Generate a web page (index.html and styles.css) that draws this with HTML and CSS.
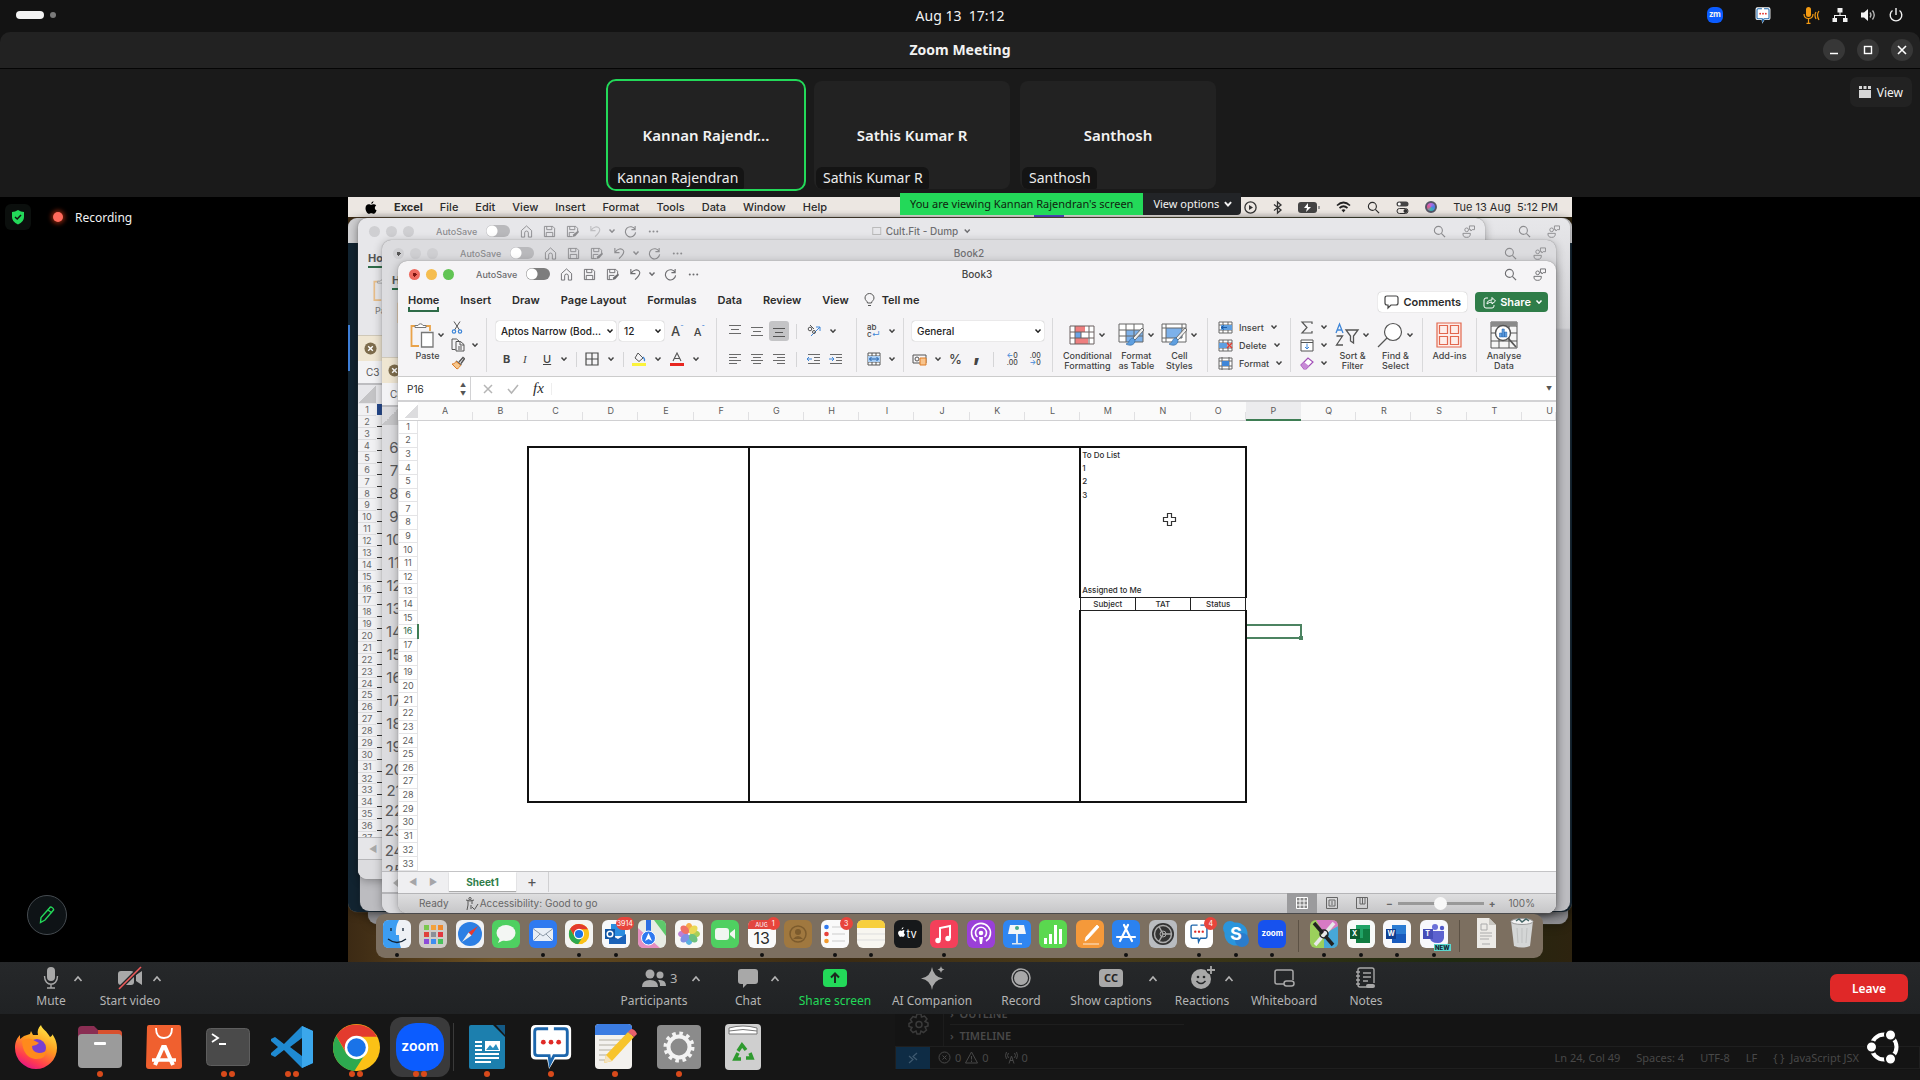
FILE: index.html
```html
<!DOCTYPE html>
<html lang="en">
<head>
<meta charset="utf-8">
<title>Zoom Meeting</title>
<link rel="stylesheet" href="styles.css">
</head>
<body>
<svg class="sprite" aria-hidden="true">
  <symbol id="chev" viewBox="0 0 8 8"><path d="M1.500 2.500 4 5.200 6.500 2.500" fill="none" stroke="currentColor" stroke-width="1.500"/></symbol>
  <symbol id="caret" viewBox="0 0 10 10"><path d="M1.500 7 5 3 8.500 7" fill="none" stroke="currentColor" stroke-width="1.600"/></symbol>
  <symbol id="home" viewBox="0 0 14 14"><path d="M1.500 6 7 1 12.500 6v7H9V8.500a2 2 0 0 0-4 0V13H1.500z" fill="none" stroke="currentColor"/></symbol>
  <symbol id="save" viewBox="0 0 14 14"><path d="M1.500 1.500h9l2 2v9h-11zM4 1.500v3.500h5.500V1.500M3.500 12.500V8h7v4.500" fill="none" stroke="currentColor"/></symbol>
  <symbol id="saveas" viewBox="0 0 14 14"><path d="M7 12.500H1.500v-11h9l2 2v3M4 1.500v3.500h5.500V1.500M3.500 12.500V8H9" fill="none" stroke="currentColor"/><path d="m7 13 1-3 5-4 1 1.500L10 12z" fill="currentColor"/></symbol>
  <symbol id="undo" viewBox="0 0 14 14"><path d="M2 1v5h5M2 6C5 1.500 9 1 11 3.500s0 5-4.500 9" fill="none" stroke="currentColor" stroke-width="1.200"/></symbol>
  <symbol id="redo" viewBox="0 0 14 14"><path d="M12 1v4H8M12 5a5.500 5.500 0 1 0 .5 3" fill="none" stroke="currentColor" stroke-width="1.200"/></symbol>
  <symbol id="dots" viewBox="0 0 14 14"><g fill="currentColor"><circle cx="3" cy="7" r="1.100"/><circle cx="7" cy="7" r="1.100"/><circle cx="11" cy="7" r="1.100"/></g></symbol>
  <symbol id="search" viewBox="0 0 14 14"><circle cx="5.800" cy="5.800" r="4.300" fill="none" stroke="currentColor" stroke-width="1.200"/><path d="m9 9 4 4" stroke="currentColor" stroke-width="1.300"/></symbol>
  <symbol id="people" viewBox="0 0 14 14"><g fill="none" stroke="currentColor"><circle cx="5" cy="5.200" r="2"/><path d="M1 9h8c0 3-1 4.300-4 4.300S1 12 1 9zM8 1h5.500v4H11L9.500 6.500V5H8z"/></g></symbol>
  <symbol id="clip" viewBox="0 0 24 26"><path d="M9 24H1.500V4H7M15 4h5v5" fill="none" stroke="#e9a34a" stroke-width="1.800"/><path d="M5 5.500V3.500h3a2.700 2.700 0 0 1 5 0h3v2z" fill="#fff" stroke="#777"/><path d="M11.500 10.500H23V25H11.500z" fill="#fff" stroke="#777" stroke-width="1.300"/></symbol>
  <symbol id="cut" viewBox="0 0 12 13"><path d="M3 .5 8.500 9M9 .5 3.500 9" stroke="#555" fill="none"/><g fill="none" stroke="#3f86d8" stroke-width="1.200"><circle cx="3" cy="10.500" r="1.700"/><circle cx="9" cy="10.500" r="1.700"/></g></symbol>
  <symbol id="copy" viewBox="0 0 14 14"><path d="M4.500 11.500H1V1h4.500L8 3M5 3.500h4.500l3.500 3V13H5zM9 3.500V7h4M7 9h4M7 11h4" fill="none" stroke="#555"/></symbol>
  <symbol id="brush" viewBox="0 0 14 14"><path d="m8 6 4-4.500 1.500 1.200L10 7.500M5 5l5.500 4" fill="none" stroke="#555" stroke-width="1.400"/><path d="M5 5.500c-1 2-2.500 2.500-4 2.500l5 5c2-1 3-2.500 3.500-4z" fill="#f6c78f" stroke="#dd7d27"/></symbol>
  <symbol id="al" viewBox="0 0 14 12"><path d="M1 1.500h12M1 4.500h8M1 7.500h12M1 10.500h8" stroke="#6a6a6a"/></symbol>
  <symbol id="ac" viewBox="0 0 14 12"><path d="M1 1.500h12M3 4.500h8M1 7.500h12M3 10.500h8" stroke="#6a6a6a"/></symbol>
  <symbol id="ar" viewBox="0 0 14 12"><path d="M1 1.500h12M5 4.500h8M1 7.500h12M5 10.500h8" stroke="#6a6a6a"/></symbol>
  <symbol id="vt" viewBox="0 0 14 12"><path d="M1 .5h12M3 4.500h8M1 8.500h12" stroke="#6a6a6a"/></symbol>
  <symbol id="vm" viewBox="0 0 14 12"><path d="M1 2.500h12M3 6.500h8M1 10.500h12" stroke="#6a6a6a"/></symbol>
  <symbol id="vb" viewBox="0 0 14 12"><path d="M1 3.500h12M3 7.500h8M1 11.500h12" stroke="#555"/></symbol>
  <symbol id="ind" viewBox="0 0 14 12"><path d="M1 1.500h12M7 4.500h6M7 7.500h6M1 10.500h12" stroke="#6a6a6a"/><path d="M0 6h5M2 4 0 6l2 2" stroke="#3f86d8" fill="none"/></symbol>
  <symbol id="outd" viewBox="0 0 14 12"><path d="M1 1.500h12M7 4.500h6M7 7.500h6M1 10.500h12" stroke="#6a6a6a"/><path d="M0 6h5M3 4l2 2-2 2" stroke="#3f86d8" fill="none"/></symbol>
  <symbol id="borders" viewBox="0 0 14 14"><path d="M1 1h12v12H1zM7 1v12M1 7h12" fill="none" stroke="#4a4a4a" stroke-width="1.200"/></symbol>
  <symbol id="fill" viewBox="0 0 14 14"><path d="m6 1 5 5-4 3.500L3 6z" fill="none" stroke="#555"/><path d="M11 5c2 2 2 3 1 4" fill="none" stroke="#3f86d8" stroke-width="1.300"/><path d="M0 11h14v3H0z" fill="#fbf33c"/></symbol>
  <symbol id="fcol" viewBox="0 0 14 14"><path d="M3 9 7 1l4 8M4.500 6.500h5" fill="none" stroke="#555" stroke-width="1.100"/><path d="M0 11h14v3H0z" fill="#e8261f"/></symbol>
  <symbol id="cellgrid" viewBox="0 0 26 20"><path d="M1 1h24v18H1z" fill="#fff"/><path d="M6 1h10v6H6zM6 13h13v6H6z" fill="#ee7f7f"/><path d="M6 7h6v6H6z" fill="#6ba4e6"/><path d="M1 1h24v18H1zM1 7h24M1 13h24M6 1v18M20 1v18M12 7v6" fill="none" stroke="#6b6060"/></symbol>
  <symbol id="fmttable" viewBox="0 0 26 24"><path d="M1 1h24v18H1z" fill="#fff"/><path d="M8 7h17v12H8z" fill="#7db1ea"/><path d="M1 1h24v18H1zM1 7h24M1 13h24M8 1v18M16 1v18" fill="none" stroke="#666"/><path d="m24 5-9 10 2 2 9-10z" fill="#eee" stroke="#555" stroke-width=".8"/><path d="M15 15c-4 0-3 5-7 6 3 2 9 2 9-4z" fill="#5f9fe0" stroke="#366ea8" stroke-width=".7"/></symbol>
  <symbol id="cellsty" viewBox="0 0 26 24"><path d="M1 1h24v18H1z" fill="#fff" stroke="#666"/><path d="M5 5h16v10H5z" fill="#7db1ea"/><path d="M1 5h24M5 1v18M1 15h20M21 1v14" stroke="#666" fill="none"/><path d="m24 5-9 10 2 2 9-10z" fill="#eee" stroke="#555" stroke-width=".8"/><path d="M15 15c-4 0-3 5-7 6 3 2 9 2 9-4z" fill="#5f9fe0" stroke="#366ea8" stroke-width=".7"/></symbol>
  <symbol id="ins" viewBox="0 0 15 13"><path d="M1 1h13v11H1zM1 4h13M1 9h13M5 1v11M10 1v11" fill="#fff" stroke="#666"/><path d="M3 4h11v5H3z" fill="#5f9fe0"/><path d="M6 4.500 3 6.500l3 2M3 6.500h6" stroke="#1c5da8" fill="none"/></symbol>
  <symbol id="del" viewBox="0 0 15 13"><path d="M1 1h13v11H1zM1 4h13M1 9h13M5 1v11M10 1v11" fill="#fff" stroke="#666"/><path d="M1 4h8v5H1z" fill="#5f9fe0"/><path d="m9 4 5 5m0-5L9 9" stroke="#e23b32" stroke-width="1.400"/></symbol>
  <symbol id="fmt" viewBox="0 0 15 13"><path d="M1 1h13v11H1zM1 4h13M1 9h13M4 0v13M11 0v13" fill="#fff" stroke="#666"/><path d="M4 4h7v5H4z" fill="#3f86d8"/></symbol>
  <symbol id="tile-x" viewBox="0 0 14 14"><circle cx="7" cy="7" r="6.500" fill="#7d6c4c"/><path d="m4.500 4.500 5 5m0-5-5 5" stroke="#fff" stroke-width="1.500"/></symbol>
  <symbol id="chrome" viewBox="0 0 44 44"><circle cx="22" cy="22" r="22" fill="#fbc116"/><path d="m3 11 9.500 16.500L22 32l-2 12A22 22 0 0 1 3 11z" fill="#2da94f"/><path d="m20 44 11-17-9 5-6 0z" fill="#2da94f"/><path d="M3 11A22 22 0 0 1 41.200 12H22l-9.500 15z" fill="#e33b2e"/><circle cx="22" cy="22" r="11" fill="#fff"/><circle cx="22" cy="22" r="8.700" fill="#1a73e8"/></symbol>
  <symbol id="bubble" viewBox="0 0 44 48"><path d="M6 1h32q5 0 5 5v26q0 5-5 5H26l-6 10-2-10H6q-5 0-5-5V6q0-5 5-5z" fill="#fff"/><path d="M19 5H8Q5 5 5 8v22q0 3 3 3h12l1 8 4-8h11q3 0 3-3V8q0-3-3-3H25" fill="none" stroke="#1c66ac" stroke-width="3"/><g fill="#e02b27"><circle cx="14" cy="19" r="2.500"/><circle cx="22" cy="19" r="2.500"/><circle cx="30" cy="19" r="2.500"/></g></symbol>
</svg>

<header class="topbar">
  <div class="spaces"><span class="pill"></span><span class="dot"></span></div>
  <div class="clock">Aug 13&nbsp; 17:12</div>
  <div class="tray">
    <span class="zm">zm</span>
    <svg class="tray-chat" width="16" height="17"><use href="#bubble"/></svg>
    <svg width="17" height="17" viewBox="0 0 17 17"><rect x="3" y="0" width="5" height="10" rx="2.500" fill="#f39a12"/><path d="M1 7c0 6 9 6 9 0M5.500 12v4M3.500 16.300h4M13 5q-2 3 0 7M16 4q-3 4 0 9" fill="none" stroke="#f39a12" stroke-width="1.200"/></svg>
    <svg width="16" height="16" viewBox="0 0 16 16" fill="#f2f2f2"><path d="M5.500 1h5v4.500h-2V8H14v3h1.500v4h-4.500v-4h2V9H3v2h2v4H.5v-4H2V8h5.500V5.500h-2z"/></svg>
    <svg width="16" height="16" viewBox="0 0 16 16"><path d="M1 5.500h3L8 2v12l-4-3.500H1z" fill="#f2f2f2"/><path d="M10 5.500q2 2.500 0 5M12.500 3.500q3.500 4.500 0 9" fill="none" stroke="#bbb" stroke-width="1.300"/></svg>
    <svg width="16" height="16" viewBox="0 0 16 16"><path d="M8 1v7M4.500 3.500a5.800 5.800 0 1 0 7 0" fill="none" stroke="#f2f2f2" stroke-width="1.400"/></svg>
  </div>
</header>

<div class="titlebar">
  <h1>Zoom Meeting</h1>
  <div class="winbtns">
    <button aria-label="Minimise"><svg width="10" height="10"><path d="M1 8.500h8" stroke="#fff" stroke-width="1.500"/></svg></button>
    <button aria-label="Maximise"><svg width="10" height="10"><rect x="1.500" y="1.500" width="7" height="7" fill="none" stroke="#fff" stroke-width="1.400"/></svg></button>
    <button aria-label="Close"><svg width="10" height="10"><path d="m1 1 8 8m0-8L1 9" stroke="#fff" stroke-width="1.600"/></svg></button>
  </div>
</div>

<section class="gallery">
  <div class="tiles">
    <div class="tile speaking"><b>Kannan Rajendr...</b><span>Kannan Rajendran</span></div>
    <div class="tile"><b>Sathis Kumar R</b><span>Sathis Kumar R</span></div>
    <div class="tile"><b>Santhosh</b><span>Santhosh</span></div>
  </div>
  <button class="viewbtn"><svg width="12" height="12" viewBox="0 0 12 12" fill="#d6d6d6"><path d="M0 0h3v3H0zM4.500 0h3v3h-3zM9 0h3v3H9zM0 4h12v8H0z"/></svg>View</button>
</section>

<main class="stage">
  <div class="rec">
    <span class="shield"><svg width="14" height="16" viewBox="0 0 14 16"><path d="M7 1q3 2 6 2v5q0 5-6 7.500Q1 13 1 8V3q3 0 6-2z" fill="#23d959"/><path d="m4 8 2.200 2L10 6" fill="none" stroke="#111" stroke-width="1.500"/></svg></span>
    <span class="reddot"></span>Recording
  </div>
  <button class="pen" aria-label="Annotate"><svg width="16" height="18" viewBox="0 0 16 18"><path d="M10.500 2q1-1.500 2.500-.5t1.700 2.300L6 14l-4.500 2.500L2 11.500zM9 4l4 3" fill="none" stroke="#23d959" stroke-width="1.400"/></svg></button>

  <div class="banner"><span>You are viewing Kannan Rajendran's screen</span><button>View options<svg width="10" height="10"><use href="#chev"/></svg></button></div>

  <div class="share">
    <nav class="macbar">
      <svg width="12" height="13" viewBox="0 0 12 13"><path d="M8.500 0q0 2.500-2.300 3Q6 1 8.500 0zM6.200 3.800C7 3.800 7.500 3.200 8.800 3.200q1.500.1 2.400 1.300c-2 1.300-1.700 4 .4 4.800C11 11 10 12.800 8.700 12.800c-1 0-1.300-.6-2.400-.6s-1.500.6-2.400.6C2.300 12.800.5 9.600.5 7.200S2 3.200 3.700 3.200c1.200 0 1.700.6 2.500.6z"/></svg>
      <b>Excel</b><span>File</span><span>Edit</span><span>View</span><span>Insert</span><span>Format</span><span>Tools</span><span>Data</span><span>Window</span><span>Help</span>
      <div class="macright">
        <svg width="13" height="13" viewBox="0 0 13 13"><circle cx="6.500" cy="6.500" r="5.600" fill="none" stroke="#333" stroke-width="1.300"/><path d="M5 4v5l4-2.500z" fill="#333"/></svg>
        <svg width="9" height="13" viewBox="0 0 9 13"><path d="M1 3.500 8 9l-3.500 3V1L8 4 1 9.500" fill="none" stroke="#333" stroke-width="1.300"/></svg>
        <svg width="22" height="11" viewBox="0 0 22 11"><rect width="19" height="11" rx="3" fill="#444"/><rect x="20" y="4" width="2" height="3" fill="#999"/><path d="m10 1-4 5h3l-1 4 5-5h-3z" fill="#fff"/></svg>
        <svg width="15" height="12" viewBox="0 0 15 12"><path d="M1 4.500q6.500-6 13 0M3.500 7q4-3.500 8 0" fill="none" stroke="#222" stroke-width="1.700"/><path d="M5.500 9q2-1.500 4 0l-2 2.500z" fill="#222"/></svg>
        <svg width="13" height="13"><use href="#search"/></svg>
        <svg width="13" height="13" viewBox="0 0 13 13"><rect x=".5" y=".5" width="12" height="5" rx="2.500" fill="#444"/><circle cx="3.300" cy="3" r="1.500" fill="#fff"/><rect x="1" y="7.500" width="11" height="5" rx="2.500" fill="none" stroke="#333"/><circle cx="9.500" cy="10" r="2" fill="#333"/></svg>
        <span class="siri"></span>
        <span class="mactime">Tue 13 Aug&nbsp; 5:12 PM</span>
      </div>
    </nav>
    <div class="purple"></div>
    <div class="win backgrey"></div>
    <div class="win backdark"><i></i></div>
    <div class="win w0"><div class="tb"><div class="tbr"><svg><use href="#search"/></svg><svg><use href="#people"/></svg></div></div></div>

    <div class="win w1">
      <div class="tb"><i class="tl"></i><i class="tl"></i><i class="tl"></i><span class="as">AutoSave</span><i class="tog"></i><svg><use href="#home"/></svg><svg><use href="#save"/></svg><svg><use href="#saveas"/></svg><svg class="faint"><use href="#undo"/></svg><svg class="ch"><use href="#chev"/></svg><svg><use href="#redo"/></svg><svg><use href="#dots"/></svg><span class="tt"><i class="doc"></i>Cult.Fit - Dump<svg class="ch"><use href="#chev"/></svg></span><div class="tbr"><svg><use href="#search"/></svg><svg><use href="#people"/></svg></div></div>
      <div class="peek"><b>Ho</b><svg class="pclip"><use href="#clip"/></svg><em>Pa</em><div class="warn"><svg width="13" height="13"><use href="#tile-x"/></svg></div><div class="ref">C3</div><div class="corner"></div></div>
      <ol class="ruler" id="ruler1"></ol>
      <div class="foot1"><span>◀</span></div>
    </div>

    <div class="win w2">
      <div class="tb"><i class="tl on"></i><i class="tl"></i><i class="tl"></i><span class="as">AutoSave</span><i class="tog"></i><svg><use href="#home"/></svg><svg><use href="#save"/></svg><svg><use href="#saveas"/></svg><svg><use href="#undo"/></svg><svg class="ch"><use href="#chev"/></svg><svg><use href="#redo"/></svg><svg><use href="#dots"/></svg><span class="tt">Book2</span><div class="tbr"><svg><use href="#search"/></svg><svg><use href="#people"/></svg></div></div>
      <div class="peek"><b>Ho</b><svg class="pclip"><use href="#clip"/></svg><em></em><div class="warn"><svg width="13" height="13"><use href="#tile-x"/></svg></div><div class="ref">C3</div><div class="corner"></div></div>
      <ol class="ruler" id="ruler2"></ol>
      <div class="foot1"><svg width="5" height="8" viewBox="0 0 5 8"><path d="M5 0v8L0 4z" fill="#aaa"/></svg></div>
    </div>

    <div class="win w3">
      <div class="tb"><i class="tl red"></i><i class="tl yel"></i><i class="tl grn"></i><span class="as">AutoSave</span><i class="tog"></i><svg><use href="#home"/></svg><svg><use href="#save"/></svg><svg><use href="#saveas"/></svg><svg><use href="#undo"/></svg><svg class="ch"><use href="#chev"/></svg><svg><use href="#redo"/></svg><svg><use href="#dots"/></svg><span class="tt">Book3</span><div class="tbr"><svg><use href="#search"/></svg><svg><use href="#people"/></svg></div></div>

      <div class="tabs">
        <a href="#" class="cur">Home</a><a href="#">Insert</a><a href="#">Draw</a><a href="#">Page Layout</a><a href="#">Formulas</a><a href="#">Data</a><a href="#">Review</a><a href="#">View</a>
        <a href="#" class="tell"><svg width="11" height="14" viewBox="0 0 11 14"><path d="M3.500 10C3.500 8 1 7.500 1 5a4.500 4.500 0 0 1 9 0c0 2.500-2.500 3-2.500 5zM4 12.500h3" fill="none" stroke="#555"/></svg>Tell me</a>
        <div class="acts">
          <button class="comm"><svg width="15" height="14" viewBox="0 0 15 14"><path d="M3 1h9q2 0 2 2v5q0 2-2 2H7l-3 3v-3H3q-2 0-2-2V3q0-2 2-2z" fill="none" stroke="#444" stroke-width="1.200"/></svg>Comments</button>
          <button class="shr"><svg width="13" height="13" viewBox="0 0 13 13"><path d="M5 2H3Q1 2 1 4v6q0 2 2 2h6q2 0 2-2V9M4 8q0-4 5-4V1.500l3.500 3.500L9 8V6Q6 6 4 8z" fill="none" stroke="#fff"/></svg>Share<svg width="8" height="8"><use href="#chev"/></svg></button>
        </div>
      </div>

      <div class="ribbon">
        <div class="grp g1">
          <button class="big"><span><svg width="24" height="26"><use href="#clip"/></svg><svg class="ch"><use href="#chev"/></svg></span>Paste</button>
          <div class="stack"><span><svg width="12" height="13"><use href="#cut"/></svg></span><span><svg width="14" height="14"><use href="#copy"/></svg><svg class="ch"><use href="#chev"/></svg></span><span><svg width="14" height="14"><use href="#brush"/></svg></span></div>
        </div>
        <div class="grp g2">
          <div class="row"><button class="drop font">Aptos Narrow (Bod...<svg class="ch"><use href="#chev"/></svg></button><button class="drop size">12<svg class="ch"><use href="#chev"/></svg></button><span class="bigA">A<sup>ˆ</sup></span><span class="smA">A<sup>ˇ</sup></span></div>
          <div class="row biu"><b>B</b><i>I</i><u>U</u><svg class="ch"><use href="#chev"/></svg><hr><svg width="14" height="14"><use href="#borders"/></svg><svg class="ch"><use href="#chev"/></svg><hr><svg width="14" height="14"><use href="#fill"/></svg><svg class="ch"><use href="#chev"/></svg><svg width="14" height="14"><use href="#fcol"/></svg><svg class="ch"><use href="#chev"/></svg></div>
        </div>
        <div class="grp g3">
          <div class="row"><svg class="a"><use href="#vt"/></svg><svg class="a"><use href="#vm"/></svg><span class="sel"><svg class="a"><use href="#vb"/></svg></span><hr><svg width="14" height="14" viewBox="0 0 14 14"><path d="m4 12 9-9M9 3h4v4" fill="none" stroke="#3f86d8"/><g fill="none" stroke="#555"><circle cx="3" cy="5" r="1.800"/><path d="M3 1l4 4"/><circle cx="7" cy="8" r="1.500"/></g></svg><svg class="ch"><use href="#chev"/></svg></div>
          <div class="row"><svg class="a"><use href="#al"/></svg><svg class="a"><use href="#ac"/></svg><svg class="a"><use href="#ar"/></svg><hr><svg class="a"><use href="#ind"/></svg><svg class="a"><use href="#outd"/></svg></div>
        </div>
        <div class="grp g4">
          <div class="row"><span class="wrap">ab<br>c<i>↵</i></span><svg class="ch"><use href="#chev"/></svg></div>
          <div class="row"><svg width="14" height="14" viewBox="0 0 14 14"><path d="M1 1h12v12H1zM1 4h12M1 10h12M5 1v3M9 1v3M5 10v3M9 10v3" fill="#fff" stroke="#555"/><path d="M1 4h12v6H1z" fill="#a9cdf3"/><path d="M2.500 7h9M4.500 5 2.500 7l2 2M9.500 5l2 2-2 2" stroke="#1c5da8" fill="none"/></svg><svg class="ch"><use href="#chev"/></svg></div>
        </div>
        <div class="grp g5">
          <div class="row"><button class="drop gen">General<svg class="ch"><use href="#chev"/></svg></button></div>
          <div class="row"><svg width="15" height="13" viewBox="0 0 15 13"><path d="M1 2h13v8H1z" fill="none" stroke="#555"/><circle cx="5" cy="6" r="2" fill="none" stroke="#555"/><path d="M8 5h6v7H8z" fill="#f8c48d" stroke="#dd7d27"/></svg><svg class="ch"><use href="#chev"/></svg><span class="pct">%</span><span class="com">,</span><hr><span class="dec"><i>←</i>0<br>.00</span><span class="dec">.00<br><i>→</i>0</span></div>
        </div>
        <div class="grp g6">
          <button class="big"><span><svg width="26" height="22"><use href="#cellgrid"/></svg><svg class="ch"><use href="#chev"/></svg></span>Conditional<br>Formatting</button>
          <button class="big"><span><svg width="26" height="24"><use href="#fmttable"/></svg><svg class="ch"><use href="#chev"/></svg></span>Format<br>as Table</button>
          <button class="big"><span><svg width="26" height="24"><use href="#cellsty"/></svg><svg class="ch"><use href="#chev"/></svg></span>Cell<br>Styles</button>
        </div>
        <div class="grp g7 stack">
          <span><svg width="15" height="13"><use href="#ins"/></svg>Insert<svg class="ch"><use href="#chev"/></svg></span>
          <span><svg width="15" height="13"><use href="#del"/></svg>Delete<svg class="ch"><use href="#chev"/></svg></span>
          <span><svg width="15" height="13"><use href="#fmt"/></svg>Format<svg class="ch"><use href="#chev"/></svg></span>
        </div>
        <div class="grp g8">
          <div class="stack"><span><svg width="14" height="13" viewBox="0 0 14 13"><path d="M12 3V1H2l5 5.500L2 12h10v-2" fill="none" stroke="#555" stroke-width="1.200"/></svg><svg class="ch"><use href="#chev"/></svg></span><span><svg width="14" height="13" viewBox="0 0 14 13"><path d="M1 1h12v11H1zM1 3.500h12" fill="#fff" stroke="#555"/><path d="M7 4.500V10M5 8l2 2 2-2" fill="none" stroke="#3f86d8"/></svg><svg class="ch"><use href="#chev"/></svg></span><span><svg width="14" height="13" viewBox="0 0 14 13"><path d="m1 8 7-7 5 4-7 7H4z" fill="#fff" stroke="#a24fb8" stroke-width="1.200"/><path d="m1 8 3-3 5 4-3 3H4z" fill="#c78ad6"/></svg><svg class="ch"><use href="#chev"/></svg></span></div>
          <button class="big"><span><svg width="24" height="24" viewBox="0 0 24 24"><path d="M1 10 4.500 1 8 10M2.500 7h4" fill="none" stroke="#3f86d8" stroke-width="1.300"/><path d="M1.500 13h6l-6 9h6.500M11 7h12l-4.500 6v7l-3-2v-5z" fill="none" stroke="#555" stroke-width="1.300"/></svg><svg class="ch"><use href="#chev"/></svg></span>Sort &amp;<br>Filter</button>
          <button class="big"><span><svg width="26" height="26" viewBox="0 0 26 26"><circle cx="16" cy="10" r="8.500" fill="#fff" stroke="#555" stroke-width="1.200"/><path d="m10 16-9 9" stroke="#555" stroke-width="1.300"/></svg><svg class="ch"><use href="#chev"/></svg></span>Find &amp;<br>Select</button>
        </div>
        <div class="grp g9"><button class="big"><span><svg width="26" height="26" viewBox="0 0 26 26"><path d="M1 1h24v24H1zM3.500 3.500h8v8h-8zM14.500 3.500h8v8h-8zM3.500 14.500h8v8h-8zM14.500 14.500h8v8h-8z" fill="#fdeeea" stroke="#e2674e" stroke-width="1.200"/></svg></span>Add-ins</button></div>
        <div class="grp g10"><button class="big"><span><svg width="28" height="28" viewBox="0 0 28 28"><path d="M1 1h26v26H1zM1 5h26M1 12h26M1 20h26M9 5v22M19 5v22" fill="#f6f6f6" stroke="#555"/><path d="M1 1h26v4H1z" fill="#8a8a8a"/><circle cx="13" cy="12" r="7.500" fill="#fff" stroke="#555" stroke-width="1.400"/><path d="M9.500 16v-4h2.300v4zM12 16V8h2.300v8zM14.500 16v-5h2.300v5z" fill="#5f9fe0" stroke="#1c5da8" stroke-width=".5"/><path d="m18 17 8 9" stroke="#555" stroke-width="1.800"/></svg></span>Analyse<br>Data</button></div>
      </div>

      <div class="fbar"><span class="name">P16<i>▲<br>▼</i></span><svg width="12" height="12"><path d="m2 2 8 8m0-8-8 8" stroke="#b5b5b5" stroke-width="1.500"/></svg><svg width="12" height="12"><path d="m1 6 3.500 4L11 2" fill="none" stroke="#b5b5b5" stroke-width="1.500"/></svg><em>fx</em><input aria-label="Formula"><span class="fd">▼</span></div>

      <div class="sheet"><table id="grid"></table>
        <svg class="cursor" width="15" height="15" viewBox="0 0 15 15"><path d="M5.500 1.500h4v4h4v4h-4v4h-4v-4h-4v-4h4z" fill="#fff" stroke="#333" stroke-width="1.200"/></svg>
      </div>
      <div class="stabs"><span>◀</span><span>▶</span><button class="st">Sheet1</button><button class="plus">+</button></div>
      <div class="status"><span>Ready</span><svg width="14" height="13" viewBox="0 0 14 13"><path d="M1 3q4 2 8 0M3 4v4l-1 5M7 4v3M5 8v0" fill="none" stroke="#555"/><circle cx="5" cy="1.700" r="1.200" fill="none" stroke="#555"/><path d="M6 12V8M7 10l2.500 2.500L13 7" fill="none" stroke="#555"/></svg><span class="acc">Accessibility: Good to go</span>
        <div class="views"><button class="on" aria-label="Normal"><svg width="12" height="12"><path d="M.5.500h11v11H.5zM4 0v12M8 0v12M0 4h12M0 8h12" fill="#888" stroke="#fff"/></svg></button><button aria-label="Page layout"><svg width="12" height="12"><path d="M.5.500h11v11H.5zM3 3h6v6H3zM5 5h2M5 7h2" fill="none" stroke="#666"/></svg></button><button aria-label="Page break"><svg width="12" height="12"><path d="M.5.500h11v11H.5zM4 0v7h5V0M6.500 0v7" fill="none" stroke="#666"/></svg></button></div>
        <b>−</b><input type="range" aria-label="Zoom level" value="50"><b>+</b><span class="hund">100%</span>
      </div>
    </div>

    <div class="macdock">
      <span class="run"><svg viewBox="0 0 28 28"><rect width="28" height="28" rx="6" fill="#eef1f5"/><path d="M6 0h10q-4 7-3 15h3q0 8 2 13H6q-6 0-6-6V6q0-6 6-6z" fill="#3c9df2"/><path d="M5 19q9 7 18 0M8 8v3M20 8v3" fill="none" stroke="#123" stroke-width="1.300"/></svg></span>
      <span><svg viewBox="0 0 28 28"><rect width="28" height="28" rx="6" fill="#cfccc8"/><g><path d="M5 5h5v5H5z" fill="#7ac74f"/><path d="M12 5h5v5h-5z" fill="#f3a23a"/><path d="M19 5h5v5h-5z" fill="#f08a2b"/><path d="M5 12h5v5H5z" fill="#e0403c"/><path d="M12 12h5v5h-5z" fill="#8a8f98"/><path d="M19 12h5v5h-5z" fill="#e2383f"/><path d="M5 19h5v5H5z" fill="#8d4bd8"/><path d="M12 19h5v5h-5z" fill="#3d8df0"/><path d="M19 19h5v5h-5z" fill="#48c05a"/></g></svg></span>
      <span><svg viewBox="0 0 28 28"><rect width="28" height="28" rx="6" fill="#f1f2f4"/><circle cx="14" cy="14" r="12" fill="#2c7fe4"/><path d="M22 6 15.500 15.500 12.500 12.500z" fill="#e8392f"/><path d="m6 22 6.500-9.500 3 3z" fill="#eee"/></svg></span>
      <span><svg viewBox="0 0 28 28"><rect width="28" height="28" rx="6" fill="#4fd061"/><ellipse cx="14" cy="13" rx="9.500" ry="8" fill="#f3f6f3"/><path d="m8 18-2 5 6-3z" fill="#f3f6f3"/></svg></span>
      <span class="run"><svg viewBox="0 0 28 28"><rect width="28" height="28" rx="6" fill="#2f7af0"/><rect x="4" y="8" width="20" height="13" rx="2" fill="#e8eef5"/><path d="m4.500 9 9.500 7 9.500-7M5 20l6-6M23 20l-6-6" fill="none" stroke="#8d9aa8"/></svg></span>
      <span class="run"><svg viewBox="-8 -8 60 60"><rect x="-8" y="-8" width="60" height="60" rx="13" fill="#f4f4f2"/><use href="#chrome" width="44" height="44"/></svg></span>
      <span class="run"><svg viewBox="0 0 28 28"><rect width="28" height="28" rx="6" fill="#f6f8fa"/><path d="M9 4h14v12H9z" fill="#2a8de0"/><path d="M7 14l9 5 8-5v10H7z" fill="#1b62b8"/><path d="M3 9h10v10H3z" fill="#1257a5"/><circle cx="8" cy="14" r="2.800" fill="none" stroke="#fff" stroke-width="1.500"/></svg><i>3914</i></span>
      <span><svg viewBox="0 0 28 28"><rect width="28" height="28" rx="6" fill="#e8ece4"/><path d="M16 0h6q6 0 6 6v10z" fill="#5ec96b"/><path d="M0 8 22 28H6q-6 0-6-6z" fill="#e58fc0"/><path d="M8 0h5v14H8z" fill="#2b6fe2"/><circle cx="10.500" cy="18" r="7" fill="#2f7af0" stroke="#fff"/><path d="m10.500 13-3.500 8 3.500-2 3.500 2z" fill="#fff"/></svg></span>
      <span><svg viewBox="0 0 28 28"><rect width="28" height="28" rx="6" fill="#f7f7f5"/><g opacity=".85"><ellipse cx="14" cy="8" rx="3.500" ry="5" fill="#f6a02c"/><ellipse cx="14" cy="20" rx="3.500" ry="5" fill="#3fa6dd"/><ellipse cx="8" cy="14" rx="5" ry="3.500" fill="#b36bd0"/><ellipse cx="20" cy="14" rx="5" ry="3.500" fill="#9cc93c"/><ellipse cx="14" cy="8" rx="3.500" ry="5" transform="rotate(45 14 14)" fill="#e8d43c"/><ellipse cx="14" cy="8" rx="3.500" ry="5" transform="rotate(135 14 14)" fill="#55b86a"/><ellipse cx="14" cy="8" rx="3.500" ry="5" transform="rotate(225 14 14)" fill="#6f7fe0"/><ellipse cx="14" cy="8" rx="3.500" ry="5" transform="rotate(315 14 14)" fill="#ee5a4e"/></g></svg></span>
      <span><svg viewBox="0 0 28 28"><rect width="28" height="28" rx="6" fill="#4fd061"/><rect x="4" y="8" width="14" height="12" rx="3" fill="#f0f6f0"/><path d="m19 13 5-4v10l-5-4z" fill="#f0f6f0"/></svg></span>
      <span class="run cal"><svg viewBox="0 0 28 28"><rect width="28" height="28" rx="6" fill="#fafafa"/><path d="M6 0h16q6 0 6 6v3H0V6q0-6 6-6z" fill="#e2463f"/></svg><em>AUG</em><strong>13</strong><i>1</i></span>
      <span><svg viewBox="0 0 28 28"><rect width="28" height="28" rx="6" fill="#a0783f"/><circle cx="14" cy="14" r="8" fill="none" stroke="#7c5b2d" stroke-width="1.500"/><circle cx="14" cy="12" r="3" fill="#7c5b2d"/><path d="M9 19q5-6 10 0z" fill="#7c5b2d"/></svg></span>
      <span class="run"><svg viewBox="0 0 28 28"><rect width="28" height="28" rx="6" fill="#fafafa"/><circle cx="5.500" cy="7" r="2.300" fill="#2f7af0"/><circle cx="5.500" cy="14" r="2.300" fill="#e8413a"/><circle cx="5.500" cy="21" r="2.300" fill="#f39a2c"/><path d="M11 7h13M11 14h13M11 21h13" stroke="#ccc"/></svg><i>3</i></span>
      <span class="run"><svg viewBox="0 0 28 28"><rect width="28" height="28" rx="6" fill="#f8f6f0"/><path d="M6 0h16q6 0 6 6v2H0V6q0-6 6-6z" fill="#f7cf3d"/><path d="M0 14h28M0 20h28" stroke="#ddd"/></svg></span>
      <span class="tv"><svg viewBox="0 0 28 28"><rect width="28" height="28" rx="6" fill="#16181a"/><path d="M8 11q1-1.500 2.500-.5-1.500 2 .5 4-1 3-2.500 2.300T6 17q-4-5 0-6.500 1 0 2 .5zM7.500 9.500q0-2 2-2.500 0 2-2 2.500z" fill="#fff"/></svg><em>tv</em></span>
      <span class="run"><svg viewBox="0 0 28 28"><rect width="28" height="28" rx="6" fill="#f4405a"/><path d="M10 20V8l10-2v12" fill="none" stroke="#fff" stroke-width="2"/><circle cx="8" cy="20.500" r="2.700" fill="#fff"/><circle cx="18" cy="18.500" r="2.700" fill="#fff"/></svg></span>
      <span><svg viewBox="0 0 28 28"><rect width="28" height="28" rx="6" fill="#9a40d8"/><g fill="none" stroke="#fff" stroke-width="1.600"><path d="M9 21a9.500 9.500 0 1 1 10 0M10.500 17a5.500 5.500 0 1 1 7 0"/></g><circle cx="14" cy="13" r="2.300" fill="#fff"/><path d="M12 17h4l-1 7h-2z" fill="#fff"/></svg></span>
      <span><svg viewBox="0 0 28 28"><rect width="28" height="28" rx="6" fill="#2f86f2"/><path d="M7 5h14l2 9H5z" fill="#f4f6f8"/><path d="M13 14h2v9h-2zM9 23h10v1.500H9z" fill="#d8e4f2"/><circle cx="14" cy="8" r="2" fill="#4a8"/></svg></span>
      <span><svg viewBox="0 0 28 28"><rect width="28" height="28" rx="6" fill="#5ad84f"/><path d="M5 18h3v6H5zM10 14h3v10h-3zM15 5h3v19h-3zM20 9h3v15h-3z" fill="#fff"/></svg></span>
      <span><svg viewBox="0 0 28 28"><rect width="28" height="28" rx="6" fill="#f5993a"/><path d="m9 21 1-4L21 5l2 2-11 12zM7 24h16" fill="#fff" stroke="#fff" stroke-width=".8"/></svg></span>
      <span class="run"><svg viewBox="0 0 28 28"><rect width="28" height="28" rx="6" fill="#2b82f0"/><path d="M12 5l8 16M16 5 8 21M5 17h18" stroke="#fff" stroke-width="2.200" stroke-linecap="round"/></svg></span>
      <span><svg viewBox="0 0 28 28"><rect width="28" height="28" rx="6" fill="#b9bcc0"/><circle cx="14" cy="14" r="11" fill="#333"/><g fill="none" stroke="#aaa"><circle cx="14" cy="14" r="8.500" stroke-width="1.500"/><circle cx="14" cy="14" r="3"/><path d="M14 14 10 6.500M14 14h8.500M14 14l-4 7.500" stroke-width="1.500"/></g></svg></span>
      <span class="run"><svg viewBox="-8 -6 60 60"><rect x="-8" y="-6" width="60" height="60" rx="13" fill="#fff"/><use href="#bubble" width="44" height="48"/></svg><i>4</i></span>
      <span class="run sk"><svg viewBox="0 0 28 28"><circle cx="14" cy="14" r="11.500" fill="#2a95dc"/><circle cx="8" cy="8" r="7" fill="#2a95dc"/><circle cx="20" cy="20" r="7" fill="#2a7ccc"/></svg><em>S</em></span>
      <span class="run zo"><svg viewBox="0 0 28 28"><rect width="28" height="28" rx="6" fill="#1752ee"/></svg><em>zoom</em></span>
      <hr>
      <span class="run"><svg viewBox="0 0 28 28"><rect width="28" height="28" rx="6" fill="#9bd05c"/><path d="M14 14 28 6v16q0 6-6 6h-8z" fill="#47a7d8"/><path d="M14 14 6 0h16q6 0 6 6z" fill="#d77ac4"/><path d="m4 3 19 22" stroke="#222" stroke-width="3.500"/><path d="M24 3 5 25" stroke="#e8e8e8" stroke-width="3.500"/><circle cx="14" cy="14" r="4" fill="none" stroke="#222" stroke-width="1.500"/></svg></span>
      <span class="run xl"><svg viewBox="0 0 28 28"><rect width="28" height="28" rx="6" fill="#f8faf8"/><path d="M9 5h14v18H9z" fill="#21a366"/><path d="M16 9h7v14H9v-5h7z" fill="#107c41"/><path d="M3 9h10v10H3z" fill="#0d5c31"/></svg><em>X</em></span>
      <span class="run xl"><svg viewBox="0 0 28 28"><rect width="28" height="28" rx="6" fill="#f8f9fb"/><path d="M9 5h14v18H9z" fill="#2b7cd3"/><path d="M9 14h14v9H9z" fill="#185abd"/><path d="M3 9h10v10H3z" fill="#103f91"/></svg><em>W</em></span>
      <span class="run xl teams"><svg viewBox="0 0 28 28"><rect width="28" height="28" rx="6" fill="#f8f8fc"/><circle cx="15" cy="7" r="3" fill="#6a6fd8"/><circle cx="22" cy="8" r="2.200" fill="#5059c9"/><path d="M10 11h14v7q-1 5-6 5-8 0-8-6z" fill="#5d62cf"/><path d="M3 9h10v10H3z" fill="#464eb8"/></svg><em>T</em><small>NEW</small></span>
      <hr>
      <span><svg viewBox="0 0 28 28"><path d="M5-2h12l7 7v23H5z" fill="#eceae6"/><path d="M17-2v7h7z" fill="#c9c7c2"/><path d="M9 4h6v6H9zM8 13h12M8 16h12M8 19h9M10 24h8" fill="none" stroke="#aaa"/></svg></span>
      <span><svg viewBox="0 0 28 28"><path d="M3 1h22l-3 25q-8 3-16 0z" fill="#d4d6d6"/><ellipse cx="14" cy="1.500" rx="11" ry="3" fill="#f2f2f2" stroke="#999"/><path d="M8 1l3-2 3 3 4-3 3 2" fill="none" stroke="#466" stroke-width="1.500"/><path d="m9 8 1 15M19 8l-1 15M14 8v15" stroke="#bfc1c1"/></svg></span>
    </div>
  </div>
</main>

<footer class="toolbar">
  <div class="tgroup left">
    <div class="tool t82"><button class="tm"><span class="ic"><svg width="24" height="24" viewBox="0 0 24 24"><rect x="8" y="1" width="8" height="14" rx="4" fill="#a8a8a8"/><path d="M5.500 10c0 11 13 11 13 0M12 18v4M8 22h8" fill="none" stroke="#a8a8a8" stroke-width="1.400"/></svg></span>Mute</button><button class="caret" aria-label="Audio options"><svg width="10" height="10"><use href="#caret"/></svg></button></div>
    <div class="tool t76"><button class="tm"><span class="ic"><svg width="24" height="24" viewBox="0 0 24 24"><rect x="0" y="5" width="16" height="14" rx="3" fill="#a8a8a8"/><path d="m18 9 6-4v14l-6-4z" fill="#a8a8a8"/><path d="M1 23 23 1" stroke="#242628" stroke-width="4"/><path d="M1 23 23 1" stroke="#ee5a5a" stroke-width="1.600"/></svg></span>Start video</button><button class="caret" aria-label="Video options"><svg width="10" height="10"><use href="#caret"/></svg></button></div>
  </div>
  <div class="tgroup">
    <div class="tool t96 wide"><button class="tm"><span class="ic"><svg width="24" height="24" viewBox="0 0 24 24" fill="#a8a8a8"><circle cx="8" cy="8" r="4.500"/><circle cx="18" cy="9" r="3.500"/><path d="M0 21q0-7 8-7t8 7zM16 14q8-1 8 6h-6q0-4-2-6z"/></svg><span class="n">3</span></span>Participants</button><button class="caret" aria-label="Participant options"><svg width="10" height="10"><use href="#caret"/></svg></button></div>
    <div class="tool t92"><button class="tm"><span class="ic"><svg width="24" height="24" viewBox="0 0 24 24"><path d="M5 3h14q3 0 3 3v9q0 3-3 3h-8l-4 4v-4H5q-3 0-3-3V6q0-3 3-3z" fill="#a8a8a8"/></svg></span>Chat</button><button class="caret" aria-label="Chat options"><svg width="10" height="10"><use href="#caret"/></svg></button></div>
    <div class="tool t82"><button class="tm green"><span class="ic"><svg width="24" height="24" viewBox="0 0 24 24"><rect y="3" width="24" height="18" rx="4" fill="#23d959"/><path d="M12 17V8M8 11.500 12 7.500l4 4" fill="none" stroke="#1c2a20" stroke-width="2"/></svg></span>Share screen</button></div>
    <div class="tool t112"><button class="tm"><span class="ic"><svg width="24" height="24" viewBox="0 0 24 24" fill="#a8a8a8"><path d="M12 1q1.500 10 11 11.500Q13.500 14 12 24 10.500 14 1 12.500 10.500 11 12 1z"/><path d="M21 0q.5 3 3.500 3.500Q21.500 4 21 7q-.5-3-3.500-3.500Q20.500 3 21 0z"/></svg></span>AI Companion</button></div>
    <div class="tool t66"><button class="tm"><span class="ic"><svg width="24" height="24" viewBox="0 0 24 24"><circle cx="12" cy="12" r="9" fill="none" stroke="#a8a8a8" stroke-width="1.500"/><circle cx="12" cy="12" r="7" fill="#a8a8a8"/></svg></span>Record</button></div>
    <div class="tool t114 cap"><button class="tm"><span class="ic"><span class="cc">CC</span></span>Show captions</button><button class="caret" aria-label="Caption options"><svg width="10" height="10"><use href="#caret"/></svg></button></div>
    <div class="tool t68"><button class="tm"><span class="ic"><svg width="24" height="24" viewBox="0 0 24 24"><circle cx="11" cy="13" r="10" fill="#a8a8a8"/><circle cx="21" cy="3.500" r="5" fill="#26282a"/><path d="M21 0v8M17 4h8" stroke="#a8a8a8" stroke-width="1.800"/><circle cx="8" cy="11" r="1.300" fill="#26282a"/><circle cx="14" cy="11" r="1.300" fill="#26282a"/><path d="M6.500 15q4.500 5 9 0" fill="none" stroke="#26282a" stroke-width="1.500"/></svg></span>Reactions</button><button class="caret" aria-label="Reaction options"><svg width="10" height="10"><use href="#caret"/></svg></button></div>
    <div class="tool t96"><button class="tm"><span class="ic"><svg width="24" height="24" viewBox="0 0 24 24"><path d="M12 18H5q-2 0-2-2V6q0-2 2-2h14q2 0 2 2v8" fill="none" stroke="#a8a8a8" stroke-width="1.500"/><rect x="12" y="15" width="10" height="5" rx="2.500" fill="none" stroke="#a8a8a8" stroke-width="1.500"/></svg></span>Whiteboard</button></div>
    <div class="tool t68"><button class="tm"><span class="ic"><svg width="24" height="24" viewBox="0 0 24 24"><path d="M14 21H6q-2 0-2-2V4q0-2 2-2h12q2 0 2 2v13M9 7h8M9 11h8M9 15h5M2 6h4M2 10h4M2 14h4M2 18h4" fill="none" stroke="#a8a8a8" stroke-width="1.400"/><rect x="12" y="18" width="9" height="4" rx="2" fill="#a8a8a8"/></svg></span>Notes</button></div>
  </div>
  <button class="leave">Leave</button>
</footer>

<div class="dock">
  <div class="ghost">
    <div class="gtop"><svg width="24" height="24" viewBox="0 0 24 24"><path d="m10 2 4 0 .5 3 3-1 2.500 3-2 2.500 3 1.500v3l-3 1 1.500 3-3 2.500-2.500-1.500-1 3h-3l-1-3-3 1.500L3.500 18 5 15.500l-3-1v-3L5 10 3.500 7.500 6 4.500l3 1z" fill="none" stroke="#3a3a3a" stroke-width="1.500"/><circle cx="12" cy="12.500" r="3" fill="none" stroke="#3a3a3a" stroke-width="1.500"/></svg><div class="gl"><b>&rsaquo;&nbsp; OUTLINE</b><b>&rsaquo;&nbsp; TIMELINE</b></div></div>
    <div class="gbar">
      <span class="rem"><svg width="12" height="12" viewBox="0 0 12 12"><path d="m2 4 4 3.500L2 11M10 1 6 4.500 10 8" fill="none" stroke="#3f5a70" stroke-width="1.200"/></svg></span>
      <span class="errs"><svg width="13" height="13" viewBox="0 0 13 13"><circle cx="6.500" cy="6.500" r="5.500" fill="none" stroke="#484848"/><path d="m4.500 4.500 4 4m0-4-4 4" stroke="#484848"/></svg>0<svg width="13" height="13" viewBox="0 0 13 13"><path d="M6.500 1 12.500 12H.5zM6.500 5v3.500M6.500 9.500V11" fill="none" stroke="#484848"/></svg>0</span>
      <span class="errs"><svg width="13" height="13" viewBox="0 0 13 13"><path d="M6.500 5 4 12.500M6.500 5 9 12.500M5 9.500h3M3.500 2q-2 2.500 0 5M9.500 2q2 2.500 0 5M1.500 1q-2 3.500 0 7M11.500 1q2 3.500 0 7" fill="none" stroke="#484848"/></svg>0</span>
      <span class="gr">Ln 24, Col 49</span><span>Spaces: 4</span><span>UTF-8</span><span>LF</span><span>{ }&nbsp; JavaScript JSX</span>
    </div>
  </div>
  <button aria-label="Firefox"><svg width="44" height="46" viewBox="0 0 44 46"><defs><linearGradient id="ff" x1=".8" y1="0" x2=".3" y2="1"><stop offset="0" stop-color="#fff04a"/><stop offset=".45" stop-color="#ff9a1f"/><stop offset=".8" stop-color="#ff3b50"/><stop offset="1" stop-color="#e21587"/></linearGradient></defs><path d="M27 1c1 4 6 6 9 12 3-1 2-3 2-3 4 5 5 10 5 14a21 21 0 0 1-42 0c0-6 2-10 5-13v4l4-3q3-1 6-2l1-3 2 4h5c-1-4 0-7 3-10z" fill="url(#ff)"/><circle cx="23" cy="24" r="9" fill="#7a3fd0"/><path d="M8 17q7-5 13 0l4 2q-3 3-7 3 0 6 7 7 6 0 8-4-1 11-12 10Q9 33 8 17z" fill="#ff8a1c"/></svg></button>
  <button class="d1" aria-label="Files"><svg width="44" height="44" viewBox="0 0 44 44"><path d="M0 5q0-4 4-4h12l4 4h20q4 0 4 4v10H0z" fill="#8a2e53"/><path d="M20 5h20q4 0 4 4v10H20z" fill="#d8502e"/><rect y="9" width="44" height="34" rx="4" fill="#9b9b9b"/><rect x="16" y="17" width="12" height="3" rx="1" fill="#fff"/></svg></button>
  <button aria-label="App Centre"><svg width="36" height="44" viewBox="0 0 36 44"><path d="M3 0h30q2 0 2 2l1 39q0 3-3 3H3q-3 0-3-3L1 2q0-2 2-2z" fill="#f0602f"/><path d="M10 3q0 10 8 10t8-10" fill="none" stroke="#fff" stroke-width="1.800"/><path d="m9 40 8-18h2l8 18" fill="none" stroke="#fff" stroke-width="4"/><path d="M6 35h24" stroke="#fff" stroke-width="3.500"/></svg></button>
  <button class="d2" aria-label="Terminal"><svg width="44" height="38" viewBox="0 0 44 38"><rect x=".5" y=".5" width="43" height="37" rx="4" fill="#4a4a4a" stroke="#5e5e5e"/><path d="m6 6 6 4-6 4M13 16h7" fill="none" stroke="#fff" stroke-width="1.800"/></svg></button>
  <button class="d2" aria-label="Visual Studio Code"><svg width="42" height="42" viewBox="0 0 42 42"><path d="m31 0 11 5v32l-11 5L13 24 4 31l-4-2v-2l7-6-7-6v-2l4-2 9 7zm0 12L19 21l12 9z" fill="#1f8ad2"/><path d="m31 0 11 5v32l-11 5z" fill="#3ba7ec"/></svg></button>
  <button class="d2" aria-label="Chrome"><svg width="47" height="47"><use href="#chrome"/></svg></button>
  <button class="d2 act" aria-label="Zoom"><span class="zoomico">zoom</span></button>
  <hr>
  <button class="d1" aria-label="Writer"><svg width="36" height="44" viewBox="0 0 36 44"><path d="M2 0h22l12 12v30q0 2-2 2H2q-2 0-2-2V2q0-2 2-2z" fill="#1c7fae"/><path d="M27 0h9v10z" fill="#145a86"/><path d="M6 17h7M6 21h7M6 25h7M6 29h24M6 33h24M6 37h16" stroke="#fff" stroke-width="2"/><path d="M16 16h15v10H16z" fill="#fff"/><path d="m17 25 4-5 3 3 3-4 3 6z" fill="#2a8fc0"/></svg></button>
  <button class="d1" aria-label="Chat"><svg width="44" height="46"><use href="#bubble"/></svg></button>
  <button class="d1" aria-label="Text Editor"><svg width="44" height="46" viewBox="0 0 44 46"><rect x="2" width="37" height="45" rx="4" fill="#f3f1ee"/><path d="M6 0h29q4 0 4 4v7H2V4q0-4 4-4z" fill="#3b7ce2"/><path d="M6 16h22M6 21h22M6 26h18M6 31h14M6 36h9" stroke="#c7c3ba" stroke-width="1.500"/><path d="m35 8 6 5-22 24-8 2 2-8z" fill="#f7c42c"/><path d="m35 8 3-3q4 0 6 5l-3 3z" fill="#e8606c"/><path d="m13 31 6 6-8 2z" fill="#f3e2c0"/></svg></button>
  <button class="d1" aria-label="Settings"><svg width="44" height="44" viewBox="0 0 44 44"><rect width="44" height="44" rx="4" fill="#8b8b8b"/><circle cx="22" cy="22" r="13.500" fill="none" stroke="#f3f3f3" stroke-width="4" stroke-dasharray="3.500 3.560"/><circle cx="22" cy="22" r="10.500" fill="none" stroke="#f3f3f3" stroke-width="4"/></svg></button>
  <button aria-label="Trash"><svg width="36" height="46" viewBox="0 0 36 46"><rect width="36" height="46" rx="4" fill="#cfcfcf"/><path d="M4 4q14-4 28 0v6H4z" fill="#fff" stroke="#777"/><path d="M4 7q14-3 28 0" fill="none" stroke="#777"/><g fill="none" stroke="#2f9a2f" stroke-width="3.500"><path d="m13 27 4-6 4 5M25 29l2 5h-6M16 35H10l3-6"/></g></svg></button>
  <a href="#" class="ubuntu" aria-label="Show apps"><svg width="36" height="36" viewBox="0 0 36 36"><circle cx="18" cy="18" r="12.500" fill="none" stroke="#fff" stroke-width="4"/><g fill="#fff" stroke="#161616" stroke-width="2"><circle cx="5.500" cy="18" r="5.500"/><circle cx="24.500" cy="6" r="5.500"/><circle cx="24.500" cy="30" r="5.500"/></g></svg></a>
</div>
<script src="app.js"></script>
</body>
</html>
```
FILE: styles.css
```css
* { box-sizing: border-box; }
body { margin: 0; height: 100vh; display: flex; flex-direction: column; overflow: hidden; background: #131313; color: #f2f2f2; font-family: "Noto Sans", sans-serif; font-size: 12px; }
button { border: 0; background: none; padding: 0; margin: 0; font: inherit; color: inherit; }
a { color: inherit; text-decoration: none; }
svg { display: block; flex: none; overflow: visible; }
.sprite { position: absolute; width: 0; height: 0; }

.topbar { flex: none; height: 32px; display: grid; grid-template-columns: 1fr auto 1fr; align-items: center; padding: 0 16px 2px; background: #131313; }
.spaces { display: flex; align-items: center; gap: 6px; }
.pill { width: 28px; height: 8px; border-radius: 4px; background: #f4f4f4; }
.dot { width: 6px; height: 6px; border-radius: 3px; background: #7b7b7b; }
.clock { font-size: 14px; font-weight: 400; }
.tray { display: flex; justify-content: flex-end; align-items: center; gap: 12px; }
.zm { width: 16px; height: 16px; border-radius: 6px; background: #0b5cff; font-size: 8px; font-weight: 700; line-height: 14px; text-align: center; margin-right: 20px; }
.tray-chat { margin-right: 20px; }

.titlebar { flex: none; height: 37px; display: flex; align-items: center; justify-content: center; position: relative; background: #222; border-bottom: 1px solid #050505; border-radius: 10px 10px 0 0; padding-bottom: 1px; }
.titlebar h1 { margin: 0; font-size: 14px; font-weight: 700; }
.winbtns { position: absolute; right: 7px; display: flex; gap: 12px; }
.winbtns button { width: 22px; height: 22px; border-radius: 50%; background: #373737; display: grid; place-items: center; }

.gallery { flex: none; height: 128px; background: #1a1a1a; position: relative; display: flex; justify-content: center; padding: 12px 96px 8px 0; }
.tiles { display: flex; gap: 10px; }
.tile { width: 196px; height: 108px; border-radius: 8px; background: #222; display: flex; align-items: center; justify-content: center; position: relative; }
.tile b { font-size: 15px; font-weight: 600; }
.tile span { position: absolute; left: 2px; bottom: 0; padding: 0 6px 0 7px; font-size: 14px; line-height: 22px; background: #141414; border-radius: 6px 6px 2px 6px; color: #ececec; }
.speaking { outline: 2px solid #23d959; }
.viewbtn { position: absolute; right: 8px; top: 8px; height: 30px; padding: 0 9px; display: flex; align-items: center; gap: 6px; background: #222; border-radius: 7px; }

.stage { flex: 1; min-height: 0; background: #000; position: relative; display: flex; justify-content: center; }
.rec { position: absolute; left: 5px; top: 7px; display: flex; align-items: center; }
.shield { width: 26px; height: 26px; border-radius: 6px; background: #0b0f0d; display: grid; place-items: center; margin-right: 22px; }
.reddot { width: 10px; height: 10px; border-radius: 50%; background: #ff6a5c; box-shadow: 0 0 4px 2px #7a200c; margin-right: 12px; }
.pen { position: absolute; left: 27px; bottom: 27px; width: 40px; height: 40px; border-radius: 50%; border: 1px solid #454b50; background: #0e1316; display: grid; place-items: center; }
.banner { position: absolute; z-index: 5; top: -4px; left: 900px; display: flex; line-height: 22px; font-size: 11px; }
.banner span { background: #23d959; color: #10240f; padding: 0 10px; }
.banner button { background: #222427; padding: 0 8px 0 10px; display: flex; align-items: center; gap: 4px; border-radius: 0 0 4px 0; }

.share { height: 100%; aspect-ratio: 8 / 5; position: relative; overflow: hidden; font-family: Inter, sans-serif; color: #2b2b2b; background: linear-gradient(90deg, #3c2a14, #6b5022 12%, #3a2a12 40%, #4a3b1a 60%, #1f2a10 90%, #2d230f); }
.macbar { height: 20px; display: flex; align-items: center; background: #ece7e2; font-size: 11px; font-weight: 500; gap: 17px; padding: 0 14px 0 17px; }
.macbar b { font-weight: 700; }
.macright { margin-left: auto; display: flex; align-items: center; gap: 16px; font-weight: 400; }
.siri { width: 12px; height: 12px; border-radius: 50%; background: conic-gradient(#b56be0, #4d7be8, #36b9b0, #e05a8c, #b56be0); border: 2px solid #556; }
.purple { position: absolute; left: 686px; top: 17px; width: 30px; height: 3px; background: #5b4fd0; }

.win { position: absolute; border-radius: 9px; overflow: hidden; display: flex; flex-direction: column; background: #e7e7ea; box-shadow: 0 0 1px #777, 0 2px 10px rgba(0,0,0,.3); }
.backgrey { left: 20px; right: 4px; top: 24px; bottom: 38px; background: #8d8d91; }
.backdark { left: 0; right: 0; top: 21px; bottom: 50px; background: #122431; border-top: 25px solid #cfcfd1; }
.backdark i { position: absolute; left: 0; top: 82px; width: 2px; height: 46px; background: #3f7fd8; }
.w0 { left: 12px; right: 2px; top: 21px; bottom: 51px; background: linear-gradient(#e7e7ea 0, #d0d0d3 110px, #bcbcc0 112px); }
.w1 { left: 10px; right: 87px; top: 21px; bottom: 83px; }
.w2 { left: 34px; right: 16px; top: 43px; bottom: 49px; background: #dcdcdf; }
.w3 { left: 50px; right: 16px; top: 64px; bottom: 49px; background: #f5f4f6; }

.tb { flex: none; height: 26px; display: flex; align-items: center; position: relative; padding-left: 11px; color: #8d8d90; font-size: 10px; font-weight: 500; }
.w3 .tb { color: #6c6c6f; }
.tb > svg, .tbr svg { width: 13px; height: 13px; margin-right: 10px; }
.tl { width: 11px; height: 11px; border-radius: 50%; margin-right: 6px; background: #cfcfd2; }
.tl.on { background: radial-gradient(#555 0 2px, #cfcfd2 2px); }
.tl.red { background: radial-gradient(#7d1510 0 2px, #ee6a5f 2px); }
.tl.yel { background: #f5bd4f; }
.tl.grn { background: #61c454; }
.as { width: 45px; margin: 0 5px 0 16px; white-space: nowrap; font-size: 9px; }
.tog { width: 24px; height: 12px; border-radius: 6px; background: radial-gradient(circle at 6px 6px, #fff 5px, transparent 6px), #b9b9bc; margin-right: 10px; }
.w3 .tog { background: radial-gradient(circle at 6px 6px, #fff 5px, transparent 6px), #7d7d7d; }
.tb svg.ch { width: 8px; height: 8px; margin: 0 8px 0 -4px; }
.tt { position: absolute; left: 50%; transform: translateX(-50%); display: flex; align-items: center; gap: 5px; font-size: 10px; color: #6f6f72; }
.w3 .tt { color: #444; }
.tb .tt svg.ch { margin: 0; }
.doc { width: 9px; height: 8px; border: 1px solid #bbb; }
.tbr { margin-left: auto; display: flex; gap: 6px; }
.faint { opacity: .45; }

.peek { flex: none; height: 160px; font-size: 10px; position: relative; display: flex; flex-direction: column; }
.peek b { padding: 7px 0 1px; margin-left: 10px; font-size: 11px; line-height: 14px; border-bottom: 2px solid #2e6b48; color: #555; }
.pclip { width: 24px; height: 24px; margin: 10px 0 3px 14px; opacity: .6; }
.peek em { font-style: normal; font-size: 9px; height: 12px; margin-left: 17px; color: #777; }
.warn { height: 26px; margin-top: 18px; background: #efe6d2; padding: 6px; border-top: 1px solid #cfc8b8; }
.ref { height: 24px; background: #f3f3f5; padding: 5px 8px; color: #555; border-bottom: 2px solid #bdbdc0; }
.corner { height: 18px; width: 18px; background: linear-gradient(135deg, transparent 50%, #c4c4c6 50%); }
.ruler { flex: 1; min-height: 0; overflow: hidden; margin: 0; padding: 0; list-style: none; color: #666; display: flex; flex-direction: column; }
.w1 .ruler { background: #f1f1f3; }
.w1 .ruler li { flex: none; height: 12px; line-height: 12px; font-size: 9px; width: 18px; text-align: center; border-bottom: 1px solid #dcdcde; position: relative; }
.w1 .ruler li:nth-child(8n) { height: 11px; }
.w1 .ruler li::after { content: ""; position: absolute; left: 19px; bottom: 0; width: 5px; height: 1px; background: #333; }
.w1 .ruler li:first-child::after { height: 12px; background: #24488c; }
.w2 .peek { height: 162px; }
.w2 .ruler li { flex: none; height: 23px; line-height: 23px; font-size: 15px; width: 24px; text-align: center; }
.w2 .ruler li:nth-child(n+16) { height: 20px; line-height: 20px; }
.w2 .ruler { color: #5a5a5c; padding-top: 8px; }
.foot1 { flex: none; height: 42px; border-top: 1px solid #b9b9bc; font-size: 9px; line-height: 22px; padding-left: 11px; color: #aaa; background: linear-gradient(#e6e6e9 50%, #b5b5b8 50% 54%, #dcdcdf 54%); }
.foot1 svg { margin-top: 7px; }

.tabs { flex: none; height: 31px; display: flex; align-items: center; gap: 21px; padding: 0 8px 5px 10px; font-size: 11px; font-weight: 600; position: relative; }
.cur { box-shadow: 0 5px 0 -2px #f5f4f6, 0 5px 0 0 #2e6b48; }
.tell { display: flex; align-items: center; gap: 7px; margin-left: -6px; }
.tabs .acts { margin: 4px 0 0 auto; display: flex; gap: 8px; }
.acts button { height: 20px; border-radius: 4px; display: flex; align-items: center; gap: 4px; }
.comm { background: #fff; padding: 0 6px; box-shadow: 0 0 1px #999; }
.shr { background: #2f7d49; color: #fff; padding: 0 5px 0 8px; }

.ribbon { flex: none; height: 59px; display: flex; font-size: 9px; font-weight: 500; color: #444; border-bottom: 1px solid #ccc; padding-bottom: 4px; }
.ribbon svg.ch { width: 8px; height: 8px; }
.grp { display: flex; border-right: 1px solid #d9d9db; flex: none; }
.g1 { width: 89px; padding-left: 12px; gap: 6px; }
.g2 { width: 230px; padding-left: 9px; }
.g3 { width: 140px; padding-left: 11px; }
.g4 { width: 47px; padding-left: 10px; }
.g5 { width: 149px; padding-left: 8px; }
.g6 { width: 155px; padding-left: 10px; gap: 6px; }
.g7 { width: 83px; padding-left: 10px; }
.g8 { width: 132px; padding-left: 9px; gap: 7px; }
.g9 { width: 54px; justify-content: center; }
.g10 { border: 0; width: 54px; justify-content: center; }
.g2, .g3, .g4, .g5 { flex-direction: column; justify-content: space-between; }
.row { height: 26px; display: flex; align-items: center; gap: 7px; }
.row hr { width: 1px; height: 15px; border: 0; margin: 0 3px; background: #d5d5d7; }
.big { display: flex; flex-direction: column; align-items: center; justify-content: flex-start; line-height: 10px; text-align: center; }
.big > span { height: 33px; display: flex; align-items: center; gap: 3px; }
.stack { display: flex; flex-direction: column; justify-content: space-between; }
.stack > span { height: 18px; display: flex; align-items: center; gap: 6px; }
.drop { height: 20px; background: #fff; border-radius: 3px; box-shadow: 0 0 1px #888; display: flex; align-items: center; justify-content: space-between; padding: 0 2px 0 5px; font-size: 10px; color: #222; white-space: nowrap; }
.font { width: 120px; } .size { width: 45px; margin-left: -4px; } .gen { width: 132px; }
.bigA { font-size: 13px; } .smA { font-size: 11px; margin-left: 3px; }
.row sup { font-size: 8px; color: #3f86d8; }
.biu { font-size: 11px; gap: 8px; padding-left: 7px; }
.biu b { width: 12px; } .biu i { width: 12px; font-family: "Liberation Serif", serif; } .biu u { width: 9px; }
.biu hr { margin: 0; }
.g3 .row { gap: 8px; }
.g3 .row hr { margin: 0 2px; }
.a { width: 14px; height: 12px; }
.sel { width: 20px; height: 20px; background: #c4c4c6; border-radius: 3px; display: grid; place-items: center; margin: 0 -3px; }
.wrap { font-size: 8px; line-height: 7px; width: 14px; } .wrap i, .dec i { color: #3f86d8; font-style: normal; }
.pct { font-size: 13px; } .com { font-size: 22px; line-height: 10px; font-weight: 800; padding: 0 4px; margin-top: -12px; }
.g5 .row hr { margin: 0 1px; }
.dec { font-size: 7px; line-height: 7px; width: 16px; text-align: right; }

.fbar { flex: none; height: 25px; display: flex; align-items: center; background: #fff; border-bottom: 2px solid #d2d2d4; font-size: 10px; }
.name { width: 73px; height: 100%; padding: 0 4px 0 9px; display: flex; align-items: center; justify-content: space-between; border-right: 1px solid #d2d2d4; margin-right: 11px; }
.name i { font-style: normal; font-size: 6px; line-height: 9px; color: #555; }
.fbar svg { margin-right: 13px; }
.fbar em { font: italic 15px "Liberation Serif", serif; margin: 0 7px 0 1px; }
.fbar input { flex: 1; border: 0; border-left: 1px solid #eee; height: 12px; outline: 0; min-width: 0; }
.fd { font-size: 6px; padding-right: 4px; color: #555; }

.sheet { flex: 1; min-height: 0; background: #fff; position: relative; overflow: hidden; }
#grid { width: 100%; height: 100%; table-layout: fixed; border-collapse: collapse; font-size: 8px; line-height: 10px; }
#grid th { font-weight: 400; color: #5c5c5c; padding: 0; font-size: 9px; border: 1px solid #e4e4e6; }
#grid thead th { height: 18px; border-width: 0 0 1px 0; border-color: #d0d0d2; background: linear-gradient(90deg, transparent calc(100% - 1px), #e0e0e2 0) 0 100% / 100% 8px no-repeat, #fafafa; }
#grid thead th.corner-cell { background: linear-gradient(135deg, transparent 50%, #dcdcde 50%) 100% 60% / 14px 13px no-repeat; }
#grid thead th.end { text-align: right; padding-right: 3px; }
#grid thead th.hot { background: #ececee; border-bottom: 2px solid #3e7d54; }
#grid tbody th.hot { border-right: 2px solid #3e7d54; color: #2e6b48; }
#grid td { padding: 0 1px; font-weight: 500; white-space: nowrap; }
#grid .bl { border-left: 2px solid #111; } #grid .br { border-right: 2px solid #111; }
#grid .bt { border-top: 2px solid #111; } #grid .bb { border-bottom: 2px solid #111; }
#grid .thin { border: 1px solid #222; text-align: center; }
#grid .pick { border: 2px solid #4c8361; position: relative; }
.pick::after { content: ""; position: absolute; right: -3px; bottom: -3px; width: 4px; height: 4px; background: #4c8361; }
.cursor { position: absolute; left: 764px; top: 110px; }

.stabs { flex: none; height: 22px; display: flex; align-items: flex-start; background: #efeff1; border-top: 1px solid #c4c4c6; font-size: 9px; color: #a5a5a8; line-height: 20px; padding-left: 11px; }
.stabs span { width: 20px; }
.st { height: 19px; width: 67px; background: #fff; color: #2f7d49; font-weight: 700; font-size: 10px; box-shadow: 0 1px 1px #aaa; }
.plus { width: 33px; font-size: 15px; color: #555; border-right: 1px solid #d0d0d2; }
.status { flex: none; height: 20px; display: flex; align-items: center; border-top: 1px solid #b5b5b7; background: linear-gradient(#dededf, #c6c6c8); font-size: 10px; color: #666; padding: 0 21px 1px; }
.status > svg { margin-left: 16px; }
.acc { margin-left: 1px; }
.views { margin-left: auto; display: flex; margin-right: 9px; }
.views button { width: 30px; height: 20px; display: grid; place-items: center; }
.views .on { background: #9b9b9d; }
.status input { width: 86px; margin: 0 5px; height: 14px; appearance: none; background: linear-gradient(#999, #999) 50% 50% / 100% 3px no-repeat; }
.status input::-webkit-slider-thumb { appearance: none; width: 13px; height: 13px; border-radius: 50%; background: #f8f8f8; }
.hund { margin-left: 13px; font-size: 10px; }

.macdock { position: absolute; left: 28px; right: 29px; bottom: 4px; height: 44px; border-radius: 9px; background: #7c6f60; display: flex; align-items: flex-start; justify-content: space-between; padding: 6px 7px; }
.macdock span { width: 28px; height: 28px; position: relative; }
.macdock svg { width: 28px; height: 28px; }
.macdock .run::after { content: ""; position: absolute; left: 12px; top: 33px; width: 4px; height: 4px; border-radius: 2px; background: #111; }
.macdock hr { width: 7px; height: 32px; border: 0; margin: 0; background: linear-gradient(#5c5144, #5c5144) 50% 0 / 1px 100% no-repeat; }
.macdock span > i { position: absolute; right: -4px; top: -3px; min-width: 13px; height: 13px; border-radius: 7px; background: #e8453c; color: #fff; font-size: 7px; line-height: 13px; text-align: center; font-style: normal; padding: 0 1px; }
.macdock em { position: absolute; left: 0; width: 28px; text-align: center; font-style: normal; color: #fff; }
.cal em { top: 0; font-size: 6px; line-height: 9px; }
.cal strong { position: absolute; left: 0; width: 28px; top: 9px; text-align: center; font-size: 16px; line-height: 18px; font-weight: 400; }
.macdock .tv em { left: 8px; width: 20px; top: 7px; font-size: 11px; line-height: 14px; }
.sk em { top: 4px; font-size: 18px; line-height: 20px; font-weight: 700; }
.zo em { top: 8px; font-size: 8px; line-height: 11px; font-weight: 700; }
.macdock .xl em { left: 3px; width: 10px; top: 9px; font-size: 7px; line-height: 10px; font-weight: 700; }
.teams small { position: absolute; right: -3px; bottom: -3px; background: #5ad6cc; color: #123; font-size: 6px; line-height: 7px; font-weight: 800; padding: 0 1px; }

.toolbar { flex: none; height: 52px; background: linear-gradient(#26282a, #202224); display: flex; justify-content: space-between; padding-right: 12px; color: #b4b4b4; }
.tgroup { display: flex; }
.left { padding: 0 8px 0 10px; }
.tool { position: relative; }
.tool > .tm { width: 100%; display: flex; flex-direction: column; align-items: center; padding-top: 4px; line-height: 18px; white-space: nowrap; }
.t66 { width: 66px; } .t68 { width: 68px; } .t76 { width: 76px; } .t82 { width: 82px; } .t92 { width: 92px; } .t96 { width: 96px; } .t112 { width: 112px; } .t114 { width: 114px; }
.ic { height: 24px; width: 24px; display: flex; align-items: center; position: relative; margin-bottom: 2px; }
.n { margin-left: 4px; font-size: 13px; }
.green { color: #23d959; }
.cc { width: 24px; height: 18px; border-radius: 4px; background: #a8a8a8; color: #222; font-size: 11px; line-height: 18px; font-weight: 700; text-align: center; }
.caret { position: absolute; left: calc(50% + 22px); top: 12px; }
.wide .caret, .cap .caret { left: calc(50% + 37px); }
.leave { align-self: flex-start; margin-top: 12px; width: 78px; height: 28px; border-radius: 7px; background: #e02828; color: #fff; font-weight: 600; }

.dock { flex: none; height: 66px; background: #161616; display: flex; align-items: center; gap: 4px; padding: 0 6px; position: relative; }
.dock > button { width: 60px; height: 60px; border-radius: 12px; display: grid; place-items: center; position: relative; }
.dock > hr { width: 1px; height: 48px; margin: 0 -1px; border: 0; background: #3a3a3a; }
.act { background: #3a3a3b; }
.d1::after, .d2::after { content: ""; position: absolute; bottom: 0; left: 27px; width: 6px; height: 6px; border-radius: 3px; background: #d84a1b; }
.d2::after { left: 23px; box-shadow: 8px 0 #d84a1b; }
.zoomico { width: 48px; height: 48px; border-radius: 20px; background: #0b5cff; color: #fff; font: 600 14px/46px Inter, sans-serif; text-align: center; }
.ubuntu { margin-left: auto; margin-right: 12px; position: relative; }
.ghost { position: absolute; left: 895px; right: 0; top: 0; height: 56px; overflow: hidden; color: #484848; font-size: 11px; background: #141414; }
.gtop { height: 32px; display: flex; overflow: hidden; }
.gtop svg { margin: -2px 12px 0; }
.gl { width: 241px; display: flex; flex-direction: column; line-height: 22px; border-left: 1px solid #1c1c1c; padding-left: 6px; }
.gl b { font-weight: 600; flex: none; border-bottom: 1px solid #1e1e1e; }
.gl b:first-child { margin-top: -11px; height: 22px; }
.gbar { height: 23px; display: flex; align-items: center; gap: 16px; border: 1px solid #1f1f1f; padding-right: 16px; }
.rem { width: 34px; height: 22px; display: grid; place-items: center; margin-right: -8px; background: #0e2c45; }
.errs { display: flex; align-items: center; gap: 4px; }
.gr { margin-left: auto; }
.gbar > span:last-child { padding-right: 44px; }
```
FILE: app.js
```js
// Row numbers for the two workbooks behind the front one.
function ruler(id, from, to) {
  const list = document.getElementById(id);
  for (let n = from; n <= to; n++) {
    const li = document.createElement('li');
    li.textContent = n;
    list.append(li);
  }
}
ruler('ruler1', 1, 37);
ruler('ruler2', 6, 25);

// Front workbook: columns A-U, rows 1-33.
const cols = 'ABCDEFGHIJKLMNOPQRSTU'.split('');
const text = { M3: 'To Do List', M4: '1', M5: '2', M6: '3', M13: 'Assigned to Me', M14: 'Subject', N14: 'TAT', O14: 'Status' };

function borders(c, r) {
  if (c === 'P' && r === 16) return 'pick';
  if (r === 14 && c >= 'M' && c <= 'O') return 'thin';
  const k = [];
  if (r >= 3 && r <= 28) {
    if (c === 'C' || c === 'G' || c === 'M') k.push('bl');
    if (c === 'O') k.push('br');
    if (c >= 'C' && c <= 'O') {
      if (r === 3) k.push('bt');
      if (r === 28) k.push('bb');
    }
  }
  return k.join(' ');
}

let html = '<colgroup><col style="width:19px">' + '<col>'.repeat(20) + '<col style="width:34px"></colgroup>';
html += '<thead><tr><th class="corner-cell"></th>';
html += cols.map(c => `<th class="${c === 'P' ? 'hot' : c === 'U' ? 'end' : ''}">${c}</th>`).join('');
html += '</tr></thead><tbody>';
for (let r = 1; r <= 33; r++) {
  html += `<tr><th class="${r === 16 ? 'hot' : ''}">${r}</th>`;
  html += cols.map(c => `<td class="${borders(c, r)}">${text[c + r] || ''}</td>`).join('') + '</tr>';
}
document.getElementById('grid').innerHTML = html + '</tbody>';
```
